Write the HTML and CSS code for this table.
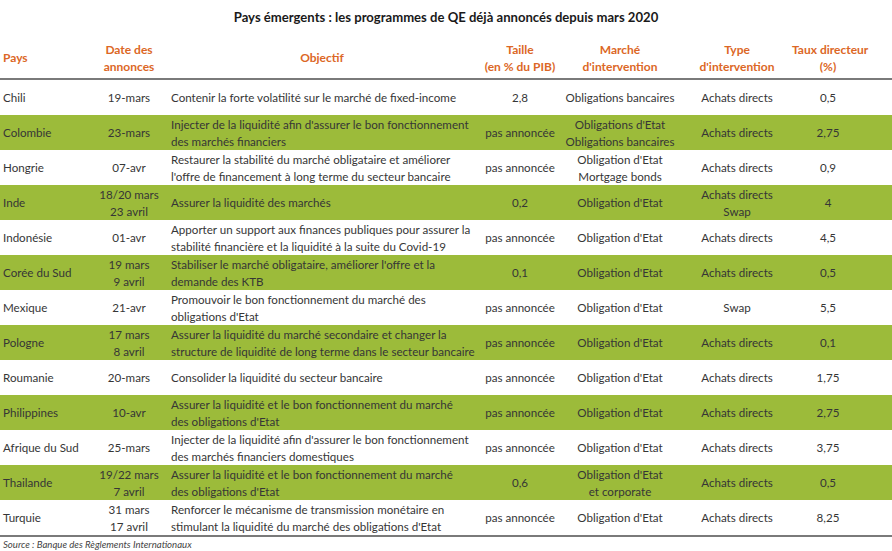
FILE: index.html
```html
<!DOCTYPE html>
<html lang="fr">
<head>
<meta charset="utf-8">
<title>Pays émergents : programmes de QE</title>
<link rel="stylesheet" href="styles.css">
</head>
<body>
<div class="page">
  <h1 class="title">Pays émergents : les programmes de QE déjà annoncés depuis mars 2020</h1>
  <table class="qe">
    <colgroup>
      <col class="c-pays"><col class="c-date"><col class="c-obj"><col class="c-taille"><col class="c-marche"><col class="c-type"><col class="c-taux"><col class="c-fill">
    </colgroup>
    <thead>
      <tr>
        <th class="left">Pays</th>
        <th>Date des<br>annonces</th>
        <th>Objectif</th>
        <th>Taille<br>(en % du PIB)</th>
        <th>Marché<br>d'intervention</th>
        <th>Type<br>d'intervention</th>
        <th>Taux directeur<br>(%)</th>
        <th></th>
      </tr>
    </thead>
    <tbody>
      <tr>
        <td class="left">Chili</td><td>19-mars</td>
        <td class="obj">Contenir la forte volatilité sur le marché de fixed-income</td>
        <td>2,8</td><td>Obligations bancaires</td><td>Achats directs</td><td>0,5</td><td></td>
      </tr>
      <tr class="g">
        <td class="left">Colombie</td><td>23-mars</td>
        <td class="obj">Injecter de la liquidité afin d'assurer le bon fonctionnement<br>des marchés financiers</td>
        <td>pas annoncée</td><td>Obligations d'Etat<br>Obligations bancaires</td><td>Achats directs</td><td>2,75</td><td></td>
      </tr>
      <tr>
        <td class="left">Hongrie</td><td>07-avr</td>
        <td class="obj">Restaurer la stabilité du marché obligataire et améliorer<br>l'offre de financement à long terme du secteur bancaire</td>
        <td>pas annoncée</td><td>Obligation d'Etat<br>Mortgage bonds</td><td>Achats directs</td><td>0,9</td><td></td>
      </tr>
      <tr class="g">
        <td class="left">Inde</td><td>18/20 mars<br>23 avril</td>
        <td class="obj">Assurer la liquidité des marchés</td>
        <td>0,2</td><td>Obligation d'Etat</td><td>Achats directs<br>Swap</td><td>4</td><td></td>
      </tr>
      <tr>
        <td class="left">Indonésie</td><td>01-avr</td>
        <td class="obj">Apporter un support aux finances publiques pour assurer la<br>stabilité financière et la liquidité à la suite du Covid-19</td>
        <td>pas annoncée</td><td>Obligation d'Etat</td><td>Achats directs</td><td>4,5</td><td></td>
      </tr>
      <tr class="g">
        <td class="left">Corée du Sud</td><td>19 mars<br>9 avril</td>
        <td class="obj">Stabiliser le marché obligataire, améliorer l'offre et la<br>demande des KTB</td>
        <td>0,1</td><td>Obligation d'Etat</td><td>Achats directs</td><td>0,5</td><td></td>
      </tr>
      <tr>
        <td class="left">Mexique</td><td>21-avr</td>
        <td class="obj">Promouvoir le bon fonctionnement du marché des<br>obligations d'Etat</td>
        <td>pas annoncée</td><td>Obligation d'Etat</td><td>Swap</td><td>5,5</td><td></td>
      </tr>
      <tr class="g">
        <td class="left">Pologne</td><td>17 mars<br>8 avril</td>
        <td class="obj">Assurer la liquidité du marché secondaire et changer la<br>structure de liquidité de long terme dans le secteur bancaire</td>
        <td>pas annoncée</td><td>Obligation d'Etat</td><td>Achats directs</td><td>0,1</td><td></td>
      </tr>
      <tr>
        <td class="left">Roumanie</td><td>20-mars</td>
        <td class="obj">Consolider la liquidité du secteur bancaire</td>
        <td>pas annoncée</td><td>Obligation d'Etat</td><td>Achats directs</td><td>1,75</td><td></td>
      </tr>
      <tr class="g">
        <td class="left">Philippines</td><td>10-avr</td>
        <td class="obj">Assurer la liquidité et le bon fonctionnement du marché<br>des obligations d'Etat</td>
        <td>pas annoncée</td><td>Obligation d'Etat</td><td>Achats directs</td><td>2,75</td><td></td>
      </tr>
      <tr>
        <td class="left">Afrique du Sud</td><td>25-mars</td>
        <td class="obj">Injecter de la liquidité afin d'assurer le bon fonctionnement<br>des marchés financiers domestiques</td>
        <td>pas annoncée</td><td>Obligation d'Etat</td><td>Achats directs</td><td>3,75</td><td></td>
      </tr>
      <tr class="g">
        <td class="left">Thailande</td><td>19/22 mars<br>7 avril</td>
        <td class="obj">Assurer la liquidité et le bon fonctionnement du marché<br>des obligations d'Etat</td>
        <td>0,6</td><td>Obligation d'Etat<br>et corporate</td><td>Achats directs</td><td>0,5</td><td></td>
      </tr>
      <tr class="last">
        <td class="left">Turquie</td><td>31 mars<br>17 avril</td>
        <td class="obj">Renforcer le mécanisme de transmission monétaire en<br>stimulant la liquidité du marché des obligations d'Etat</td>
        <td>pas annoncée</td><td>Obligation d'Etat</td><td>Achats directs</td><td>8,25</td><td></td>
      </tr>
    </tbody>
  </table>
  <p class="source">Source : Banque des Règlements Internationaux</p>
</div>
</body>
</html>
```

FILE: styles.css
```css
html, body {
  margin: 0;
  padding: 0;
  background: #ffffff;
}
.page {
  width: 892px;
  font-family: Lato, "Open Sans", sans-serif;
  color: #363636;
}
.title {
  margin: 0;
  height: 37px;
  line-height: 35px;
  font-size: 13.1px;
  font-weight: 700;
  color: #1a1a1a;
  text-align: center;
}
.qe {
  width: 892px;
  border-collapse: collapse;
  table-layout: fixed;
  font-size: 11.6px;
}
.c-pays { width: 96px; }
.c-date { width: 66px; }
.c-obj { width: 320px; }
.c-taille { width: 76px; }
.c-marche { width: 124px; }
.c-type { width: 110px; }
.c-taux { width: 72px; }
.c-fill { width: 28px; }
.qe th {
  height: 41px;
  padding: 0;
  line-height: 17px;
  color: #dc6726;
  font-weight: 700;
  font-size: 12px;
  text-align: center;
  vertical-align: middle;
  white-space: nowrap;
  border-bottom: 2px solid #7a7a7a;
}
.qe td {
  height: 35px;
  padding: 0;
  line-height: 17px;
  text-align: center;
  vertical-align: middle;
  white-space: nowrap;
}
.qe th.left, .qe td.left {
  text-align: left;
  padding-left: 3px;
}
.qe td.obj {
  text-align: left;
  padding-left: 9px;
  padding-right: 0;
}
.qe tr.g td {
  background: #9cbb3a;
}
.qe tr.last td {
  border-bottom: 2px solid #7a7a7a;
}
.source {
  margin: 2px 0 0 3px;
  font-size: 9.6px;
  line-height: 12px;
  font-style: italic;
  color: #444;
}
```
